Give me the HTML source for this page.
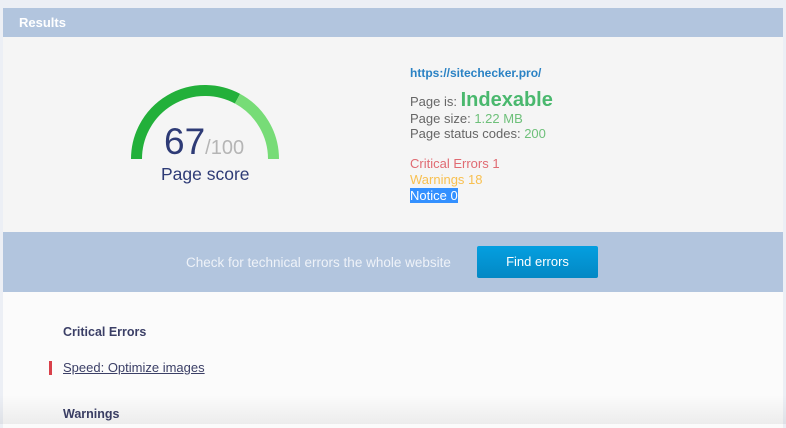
<!DOCTYPE html>
<html><head><style>
body{margin:0;width:786px;height:424px;overflow:hidden;background:#eceff5;font-family:"Liberation Sans",Arial,sans-serif;position:relative}
.panel{position:absolute;left:3px;top:8px;width:780px;height:420px;background:#fbfbfb}
.hdr{position:absolute;left:0;top:0;width:780px;height:29px;background:#b2c5de;color:#fff;font-weight:bold;font-size:13px;line-height:29px;padding-left:16px;box-sizing:border-box}
.top{position:absolute;left:0;top:29px;width:780px;height:195px;background:#f5f5f5}
.banner{position:absolute;left:0;top:224px;width:780px;height:60px;background:#b2c5de}
.btxt{position:absolute;left:183px;top:23px;color:#eef2f8;font-size:13.5px}
.btn{position:absolute;left:474px;top:14px;width:121px;height:32px;background:linear-gradient(#049fe0,#0388c4);color:#fff;font-size:13px;line-height:32px;text-align:center;border-radius:2px}
.t{position:absolute;white-space:nowrap}
</style></head><body>
<div class="panel">
<div class="hdr">Results</div>
<div class="top">
<svg width="300" height="195" style="position:absolute;left:0;top:0">
<path d="M133.5 122 A68.5 68.5 0 0 1 234.5 61.7" fill="none" stroke="#22b03a" stroke-width="11"/>
<path d="M234.5 61.7 A68.5 68.5 0 0 1 270.5 122" fill="none" stroke="#77dc77" stroke-width="11"/>
</svg>
<div class="t" style="left:161px;top:84px;font-size:37px;color:#2e3b76">67<span style="font-size:20px;color:#b5b5b5">/100</span></div>
<div class="t" style="left:158px;top:127px;font-size:17.5px;color:#2e3b76">Page score</div>
<div class="t" style="left:407px;top:29px;font-size:12px;font-weight:bold;color:#2a82c4">https://sitechecker.pro/</div>
<div class="t" style="left:407px;top:52px;font-size:13px;color:#666">Page is: <span style="font-size:20px;font-weight:bold;color:#4ab86e">Indexable</span></div>
<div class="t" style="left:407px;top:74px;font-size:13px;color:#666">Page size: <span style="color:#6ec07a">1.22 MB</span></div>
<div class="t" style="left:407px;top:89px;font-size:13px;color:#666">Page status codes: <span style="color:#6ec07a">200</span></div>
<div class="t" style="left:407px;top:119px;font-size:13px;color:#e06a72">Critical Errors 1</div>
<div class="t" style="left:407px;top:135px;font-size:13px;color:#f8c050">Warnings 18</div>
<div class="t" style="left:407px;top:151px;font-size:13px;color:#fff;background:#3390ff">Notice 0</div>
</div>
<div class="banner"><div class="btxt">Check for technical errors the whole website</div><div class="btn">Find errors</div></div>
<div class="t" style="left:60px;top:317px;font-size:12.5px;font-weight:bold;color:#3b3f66">Critical Errors</div>
<div style="position:absolute;left:46px;top:353px;width:3px;height:14px;background:#d9404a"></div>
<div class="t" style="left:60px;top:352px;font-size:13px;color:#3b3f66;text-decoration:underline">Speed: Optimize images</div>
<div class="t" style="left:60px;top:399px;font-size:12.5px;font-weight:bold;color:#3b3f66">Warnings</div>
</div>
<div style="position:absolute;left:0;top:395px;width:786px;height:29px;background:linear-gradient(rgba(0,0,0,0),rgba(0,0,0,0.06))"></div>
</body></html>
